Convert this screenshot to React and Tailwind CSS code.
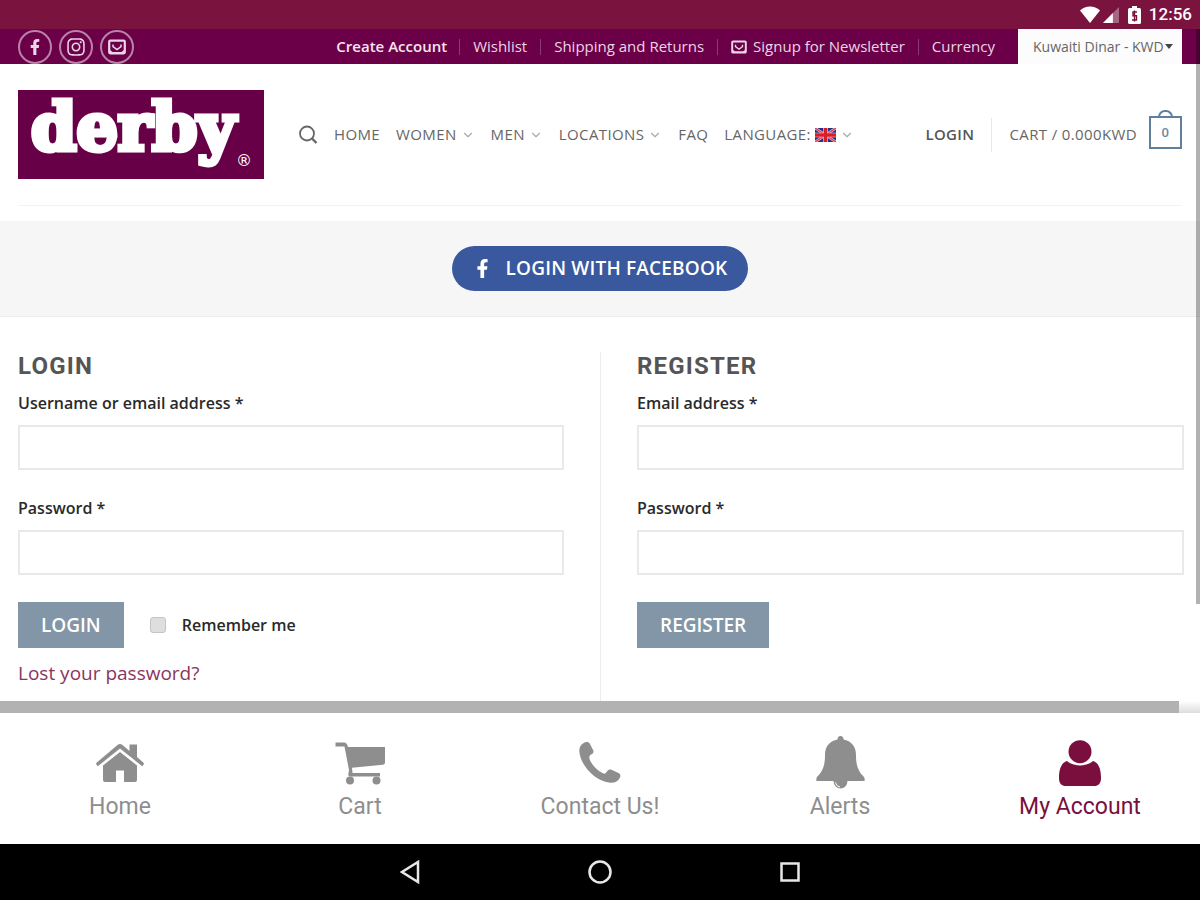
import { useState } from "react";
import { FaFacebookF, FaInstagram } from "react-icons/fa";
import { ChevronDown } from "lucide-react";

const MailIcon = ({ className }) => (
  <svg viewBox="0 0 18 16" className={className} fill="none" stroke="currentColor">
    <rect x="1.200" y="1.700" width="15.600" height="12.600" rx="1" strokeWidth="2.200" />
    <path d="M2 11v3h14v-3l-2.500 2h-9Z" fill="currentColor" stroke="none" />
    <path d="M5 5.500v2l4 3 4-3v-2" strokeWidth="1.500" />
  </svg>
);

const SearchIcon = () => (
  <svg viewBox="0 0 20 20" className="size-5" fill="none" stroke="currentColor" strokeWidth="1.800">
    <circle cx="9" cy="8.500" r="7" />
    <path d="m14 13.500 4.500 4.500" strokeWidth="2.400" />
  </svg>
);

const FlagIcon = () => (
  <svg viewBox="0 0 21 14" className="h-[14px] w-[21px]">
    <rect width="21" height="14" fill="#22318c" />
    <path d="M0 0l21 14M21 0 0 14" stroke="#f0c4d4" strokeWidth="2.600" />
    <path d="M0 0l21 14M21 0 0 14" stroke="#e0343c" strokeWidth="1.200" />
    <path d="M10.500 0v14M0 7h21" stroke="#f5d5dc" strokeWidth="4.600" />
    <path d="M10.500 0v14M0 7h21" stroke="#dd1c2a" strokeWidth="3.400" />
  </svg>
);

const HomeIcon = () => (
  <svg viewBox="0 0 48 40" className="h-10 w-12" fill="currentColor">
    <path d="M21.500 2q2.500-2 5 0L33.500 8V1.500h7.500V14l6.500 5.800q.8.900 0 1.900l-1.300 1.500L24 5.500 1.800 23.200.5 21.700q-.8-1 0-1.900Z" />
    <path d="M7 22.500 24 9l17 13.500V37q0 2-2 2H28V27.500h-8V39H9q-2 0-2-2Z" />
  </svg>
);

const CartIcon = () => (
  <svg viewBox="0 0 50 43" className="h-[43px] w-[50px]" fill="currentColor">
    <path d="M.5.5H9q3 0 4 4.500h37v15.500q0 2-2 2.300L17 25.700 17.500 31H45v3.500H15q-1.800 0-1.700-2L14 28 9.500 4.500H.5Z" />
    <circle cx="15" cy="38.500" r="4" />
    <circle cx="41.500" cy="38.500" r="4" />
  </svg>
);

const PhoneIcon = () => (
  <svg viewBox="0 0 42 42" className="size-[42px]" fill="currentColor">
    <path d="M4 1.500C7-.5 9.500-.5 11 2l3.300 6.500c.7 2-.3 3-2.300 4-1.500 1-2 2.500-1.500 4.500 2 5.500 8 12 14 14.500 1.500.5 2.500-.5 3.500-2 1.500-2 3-2.500 5-1.500l6.500 3c2 1 2.200 2.500 1.500 4.500-1.500 3.500-5 5.500-9.500 5.300C15.500 39.500 1 22.500.3 9 .3 5.500 1.500 3 4 1.500Z" />
  </svg>
);

const BellIcon = () => (
  <svg viewBox="0 0 49 54" className="h-[54px] w-[49px]" fill="currentColor">
    <path d="M24.500 0c2 0 3 1.500 3 3.500C35 5 40 10 40 19c0 10 2 16 8 22q1 1.500.5 4H.5Q0 42.500 1 41c6-6 8-12 8-22 0-9 5-14 12.500-15.500 0-2 1-3.500 3-3.500Z" />
    <path d="M17.500 45h14a7 7.500 0 0 1-14 0Z" />
    <path d="M19.500 46.500q.5 4 4.500 4.500" fill="none" stroke="#fff" strokeWidth="1" />
  </svg>
);

const UserIcon = () => (
  <svg viewBox="0 0 42 47" className="h-[47px] w-[42px]" fill="currentColor">
    <circle cx="21" cy="11.700" r="11.500" />
    <path d="M8 21c6.500 6 19.500 6 26 0 5.500 1.500 8 8 8 17 0 5.500-2.500 8-7 8H7c-4.500 0-7-2.500-7-8 0-9 2.500-15.500 8-17Z" />
  </svg>
);

const StatusBar = () => (
  <div className="flex h-[29px] items-center justify-end bg-[#7a133d] pr-2 text-white">
    <svg viewBox="0 0 20 17" className="h-[17px] w-5" fill="currentColor">
      <path d="M0 4.500C5.500-.8 14.500-.8 20 4.500L10 17Z" />
    </svg>
    <svg viewBox="0 0 17 17" className="ml-[3px] size-4" fill="currentColor">
      <path d="M17 0v17H0Z" opacity=".35" />
      <path d="M10.500 6.500V17H0Z" />
    </svg>
    <svg viewBox="0 0 13 18" className="ml-[9px] h-[18px] w-[13px]">
      <path d="M4 0h5v2h2.500Q13 2 13 3.500v13q0 1.500-1.500 1.500h-10Q0 18 0 16.500v-13Q0 2 1.500 2H4Z" fill="currentColor" />
      <path d="M9 6H5v3.700h3.500V14H4M6.500 4.500v11" stroke="#7a133d" strokeWidth="1.400" fill="none" />
    </svg>
    <span className="ml-2 font-[Roboto] text-[17px] font-medium">12:56</span>
  </div>
);

const topLinks = ["Wishlist", "Shipping and Returns", "Signup for Newsletter", "Currency"];

const TopBar = () => (
  <div className="flex h-[35px] items-center justify-between bg-[#6b0049] px-[18px] text-[#ecd5e4]">
    <div className="flex gap-[7px]">
      <a href="#facebook" aria-label="Facebook" className="flex size-[34px] items-center justify-center rounded-full border-2 border-[#b983a6]">
        <FaFacebookF className="size-4" />
      </a>
      <a href="#instagram" aria-label="Instagram" className="flex size-[34px] items-center justify-center rounded-full border-2 border-[#b983a6]">
        <FaInstagram className="size-5" />
      </a>
      <a href="#email" aria-label="Email" className="flex size-[34px] items-center justify-center rounded-full border-2 border-[#b983a6]">
        <MailIcon className="h-4 w-[18px]" />
      </a>
    </div>
    <div className="flex items-center whitespace-nowrap text-[15px]">
      <a href="#create" className="pr-3 font-semibold text-[#f6e6f0]">Create Account</a>
      {topLinks.map((link) => (
        <div key={link} className="flex h-4 items-center border-l border-[#8d3a73] px-[13px]">
          <a href="#link" className="flex items-center gap-[6px]">
            {link.startsWith("Signup") && <MailIcon className="h-[14px] w-4" />}
            {link}
          </a>
        </div>
      ))}
      <div className="relative ml-[10px]">
        <select aria-label="Currency" className="h-[35px] w-[164px] appearance-none bg-[#fcfcfc] pl-[15px] text-sm text-[#666]">
          <option>Kuwaiti Dinar - KWD</option>
        </select>
        <svg viewBox="0 0 8 5" className="pointer-events-none absolute top-[15px] right-[9px] h-[5px] w-2" fill="#444">
          <path d="M0 0h8L4 5Z" />
        </svg>
      </div>
    </div>
  </div>
);

const navItems = [
  { label: "HOME" },
  { label: "WOMEN", menu: true },
  { label: "MEN", menu: true },
  { label: "LOCATIONS", menu: true },
  { label: "FAQ" },
  { label: "LANGUAGE:", menu: true, flag: true },
];

const Header = () => (
  <header className="px-[18px] pb-[15px]">
    <div className="flex items-center border-b border-[#f3f3f3] pt-[26px] pb-[26px] whitespace-nowrap">
      <a href="#derby" className="relative flex h-[89px] w-[246px] shrink-0 bg-[#680048] pl-[13px] text-white">
        <span className="font-['DejaVu_Serif'] text-[65px] leading-[74px] font-bold [-webkit-text-stroke:5px_white]">derby</span>
        <span className="absolute right-[12px] bottom-[8px] font-['DejaVu_Sans'] text-[16px] leading-5">®</span>
      </a>
      <nav className="ml-[34px] flex items-center gap-4 text-[15px] tracking-wide text-[#666]">
        <a href="#search" aria-label="Search"><SearchIcon /></a>
        {navItems.map((item) => (
          <a key={item.label} href="#nav" className="flex items-center gap-1">
            {item.label}
            {item.flag && <FlagIcon />}
            {item.menu && <ChevronDown className="size-[14px] text-[#aaa]" strokeWidth={2} />}
          </a>
        ))}
      </nav>
      <div className="ml-auto flex items-center text-[15px] tracking-wide text-[#666]">
        <a href="#login" className="font-semibold text-[#555]">LOGIN</a>
        <span className="mx-[17px] h-[34px] w-px bg-[#e8e8e8]" />
        <a href="#cart" className="flex items-center gap-3">
          CART / 0.000KWD
          <span className="relative mt-1 mb-2 flex size-[33px] items-center justify-center border-2 border-[#5f7f9c] text-[13px] font-semibold text-[#6b88a2]">
            0
            <span className="absolute -top-2 left-[7px] h-[7px] w-[15px] rounded-t-full border-2 border-b-0 border-[#5f7f9c]" />
          </span>
        </a>
      </div>
    </div>
  </header>
);

const Field = ({ id, label, type = "text" }) => (
  <div className="flex flex-col gap-[10px]">
    <label htmlFor={id} className="text-base leading-6 font-semibold text-[#2a2a2a]">{label} *</label>
    <input id={id} type={type} className="h-[45px] w-full border-2 border-[#e9e9e9] bg-white px-3 text-base outline-none" />
  </div>
);

const tabs = [
  { label: "Home", icon: HomeIcon },
  { label: "Cart", icon: CartIcon },
  { label: "Contact Us!", icon: PhoneIcon },
  { label: "Alerts", icon: BellIcon },
  { label: "My Account", icon: UserIcon },
];

const buttonClass = "h-[46px] bg-[#8296a8] px-[23px] text-[19px] font-semibold text-white";

export default function App() {
  const [remember, setRemember] = useState(false);

  return (
    <div className="flex min-h-screen flex-col bg-white font-['Open_Sans',sans-serif]">
      <StatusBar />

      <div className="relative flex flex-1 flex-col">
        <TopBar />
        <Header />

        <div className="flex h-24 items-center justify-center border-b border-[#ececec] bg-[#f6f6f6]">
          <button type="button" className="flex h-[45px] items-center gap-[14px] rounded-full bg-[#3a589e] px-[21px] text-[19px] font-semibold tracking-[0.01em] text-white">
            <FaFacebookF className="size-[19px]" />
            LOGIN WITH FACEBOOK
          </button>
        </div>

        <main className="grid flex-1 grid-cols-2 pt-[35px] pr-4 pl-[18px]">
          <form className="border-r border-[#ececec] pr-9" onSubmit={(e) => e.preventDefault()}>
            <h2 className="font-[Roboto] text-2xl leading-7 font-bold tracking-wider text-[#555]">LOGIN</h2>
            <div className="mt-[11px] flex flex-col gap-[26px]">
              <Field id="username" label="Username or email address" />
              <Field id="password" label="Password" type="password" />
            </div>
            <div className="mt-[27px] flex items-center">
              <button type="submit" className={buttonClass}>LOGIN</button>
              <label className="ml-[26px] flex items-center gap-4 text-base font-semibold text-[#2a2a2a]">
                <input
                  type="checkbox"
                  checked={remember}
                  onChange={(e) => setRemember(e.target.checked)}
                  className="size-4 appearance-none rounded-[3px] border border-[#c4c4c4] bg-[#dedede] checked:bg-[#8296a8]"
                />
                Remember me
              </label>
            </div>
            <a href="#lost" className="mt-[11px] inline-block text-[19px] leading-7 text-[#8a3560]">Lost your password?</a>
          </form>

          <form className="pl-9" onSubmit={(e) => e.preventDefault()}>
            <h2 className="font-[Roboto] text-2xl leading-7 font-bold tracking-wider text-[#555]">REGISTER</h2>
            <div className="mt-[11px] flex flex-col gap-[26px]">
              <Field id="reg-email" label="Email address" type="email" />
              <Field id="reg-password" label="Password" type="password" />
            </div>
            <button type="submit" className={`mt-[27px] ${buttonClass}`}>REGISTER</button>
          </form>
        </main>

        {/* Scroll indicators */}
        <div className="absolute top-0 right-0 h-[84%] w-1 bg-black/30" />
        <div className="absolute inset-x-0 bottom-0 h-3 bg-linear-to-b from-white to-[#ddd] pr-[21px]">
          <div className="h-full bg-[#b2b2b2]" />
        </div>
      </div>

      <nav className="grid h-[131px] grid-cols-5 bg-white">
        {tabs.map(({ label, icon: Icon }) => (
          <a
            key={label}
            href="#tab"
            className={label === "My Account"
              ? "flex flex-col items-center pt-[22px] text-[#7a0f3d]"
              : "flex flex-col items-center pt-[22px] text-[#8e8e8e]"}
          >
            <span className="flex h-[56px] items-center"><Icon /></span>
            <span className="font-[Roboto] text-[23px] leading-8">{label}</span>
          </a>
        ))}
      </nav>

      <div className="flex h-14 items-center justify-center gap-[168px] bg-black text-[#e8e8e8]">
        <button type="button" aria-label="Back">
          <svg viewBox="0 0 20 24" className="h-6 w-5" fill="none" stroke="currentColor" strokeWidth="2.500">
            <path d="M18 2v20L2 12Z" />
          </svg>
        </button>
        <button type="button" aria-label="Home">
          <svg viewBox="0 0 24 24" className="size-6" fill="none" stroke="currentColor" strokeWidth="2.500">
            <circle cx="12" cy="12" r="10.500" />
          </svg>
        </button>
        <button type="button" aria-label="Recent apps">
          <svg viewBox="0 0 20 20" className="size-5" fill="none" stroke="currentColor" strokeWidth="2.500">
            <path d="M1.500 1.500h17v17h-17Z" />
          </svg>
        </button>
      </div>
    </div>
  );
}
